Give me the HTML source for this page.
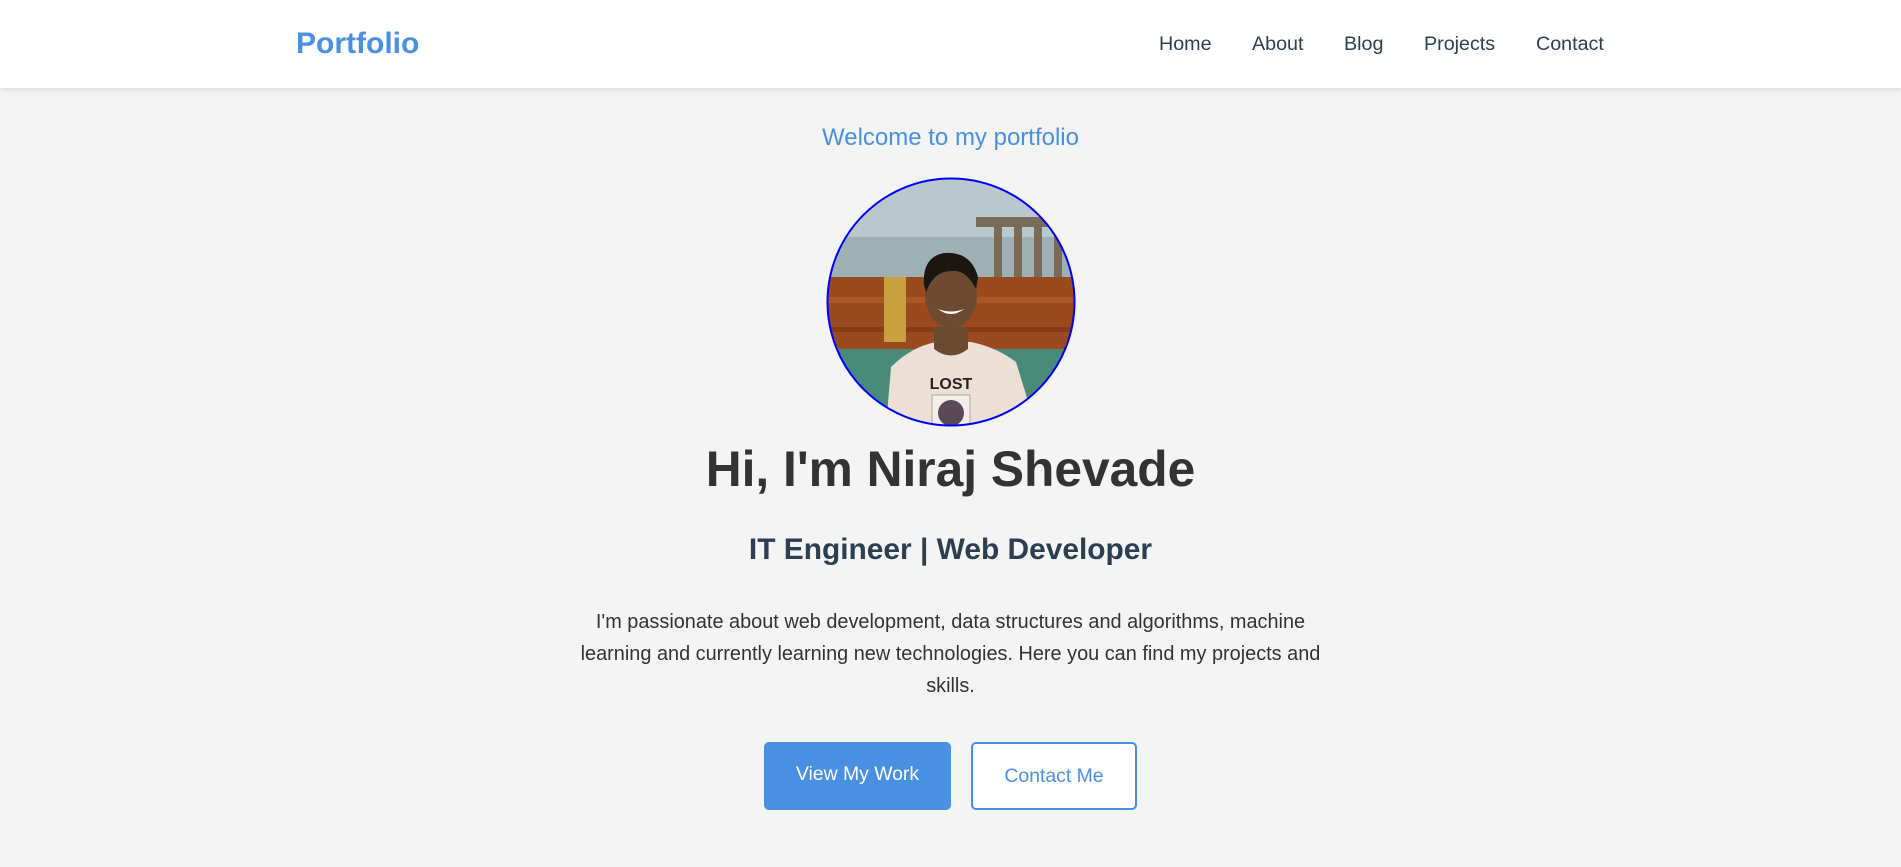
<!DOCTYPE html>
<html><head><meta charset="utf-8"><style>
*{margin:0;padding:0;box-sizing:border-box}
body{width:1901px;height:867px;background:#f4f4f4;font-family:"Liberation Sans",Arial,sans-serif;position:relative;overflow:hidden}
header{position:absolute;left:0;top:0;width:1901px;height:88px;background:#fff;box-shadow:0 2px 5px rgba(0,0,0,.1)}
.logo{position:absolute;left:296px;top:27px;font-size:30px;font-weight:bold;color:#4a90e2}
.nav a{position:absolute;top:33px;font-size:19.7px;color:#2c3e50;text-decoration:none}
.c{position:absolute;left:0;width:1901px;text-align:center}
.btn{position:absolute;top:742px;height:68px;border-radius:5px;font-size:19.4px;display:flex;align-items:center;justify-content:center}
</style></head><body>
<header><div class="logo">Portfolio</div>
<div class="nav"><a style="left:1159px">Home</a><a style="left:1252px">About</a><a style="left:1344px">Blog</a><a style="left:1424px">Projects</a><a style="left:1536px">Contact</a></div></header>
<div class="c" style="top:124px;font-size:24px;color:#4a90e2">Welcome to my portfolio</div>
<svg style="position:absolute;left:826px;top:177px" width="250" height="250" viewBox="0 0 250 250">
<defs><clipPath id="cp"><circle cx="125" cy="125" r="123"/></clipPath></defs>
<g clip-path="url(#cp)">
<rect width="250" height="250" fill="#9fb0b4"/>
<rect y="0" width="250" height="60" fill="#b9c8cc"/>
<rect x="150" y="40" width="100" height="10" fill="#7a6a5a"/>
<g fill="#7a6a5a"><rect x="168" y="45" width="8" height="60"/><rect x="188" y="45" width="8" height="60"/><rect x="208" y="45" width="8" height="60"/><rect x="228" y="45" width="8" height="60"/></g>
<rect y="100" width="250" height="75" fill="#9a4a1e"/>
<rect y="120" width="250" height="6" fill="#b05c28" opacity=".7"/>
<rect y="150" width="250" height="5" fill="#7a3712" opacity=".7"/>
<rect x="58" y="100" width="22" height="65" fill="#c8a040"/>
<rect y="172" width="250" height="80" fill="#4a8a78"/>
<path d="M60 250 L65 190 Q85 170 110 165 L145 165 Q170 170 190 185 L210 250 Z" fill="#ecdfd6"/>
<path d="M108 150 L108 172 Q125 185 142 172 L142 150 Z" fill="#6b4a34"/>
<ellipse cx="125" cy="118" rx="26" ry="33" fill="#6e4a33"/>
<path d="M98 108 Q96 80 118 76 Q145 74 152 100 L150 112 Q140 92 125 94 Q108 94 100 115 Z" fill="#1c1612"/>
<path d="M112 132 Q125 142 138 132 Q125 137 112 132Z" fill="#fff"/>
<rect x="106" y="218" width="38" height="40" fill="#f4eee8" stroke="#aaa"/>
<text x="125" y="212" text-anchor="middle" font-family="Liberation Sans" font-weight="bold" font-size="16" fill="#2a2222">LOST</text>
<circle cx="125" cy="236" r="13" fill="#5a4a58"/>
</g>
<circle cx="125" cy="125" r="123.5" fill="none" stroke="#0000ff" stroke-width="2"/>
</svg>
<div class="c" style="top:440px;font-size:49.7px;font-weight:bold;color:#333">Hi, I'm Niraj Shevade</div>
<div class="c" style="top:533px;font-size:29.9px;font-weight:bold;color:#2c3e50">IT Engineer | Web Developer</div>
<div class="c" style="top:606px;font-size:19.9px;line-height:32px;color:#333"><div style="width:760px;margin:0 auto">I'm passionate about web development, data structures and algorithms, machine learning and currently learning new technologies. Here you can find my projects and skills.</div></div>
<div class="btn" style="left:764px;width:187px;background:#4a90e2;color:#fff;padding-bottom:3px">View My Work</div>
<div class="btn" style="left:971px;width:166px;background:#fff;border:2px solid #4a90e2;color:#4a90e2">Contact Me</div>
</body></html>
